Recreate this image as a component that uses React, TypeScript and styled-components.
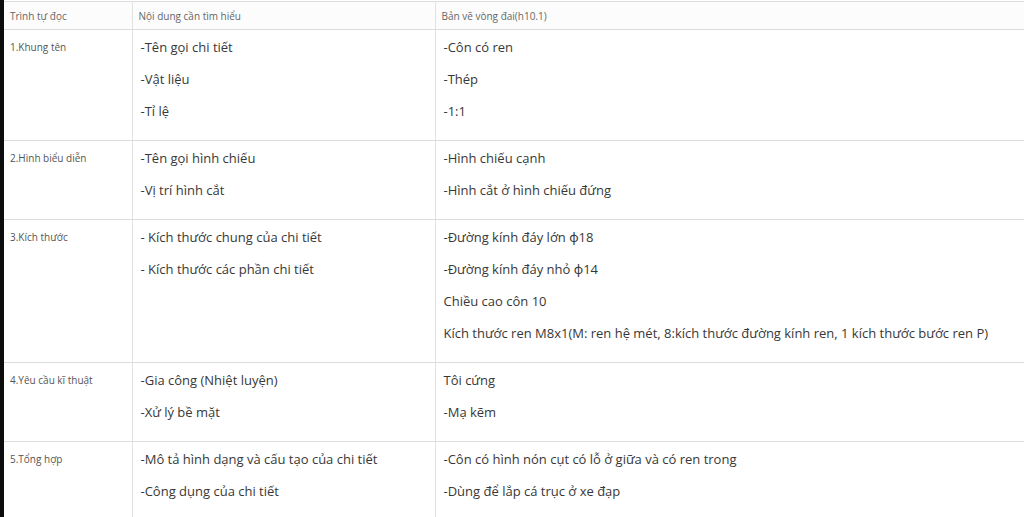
import styled, { createGlobalStyle } from 'styled-components'

const rows = [
  {
    step: '1.Khung tên',
    topics: ['-Tên gọi chi tiết', '-Vật liệu', '-Tỉ lệ'],
    answers: ['-Côn có ren', '-Thép', '-1:1'],
  },
  {
    step: '2.Hình biểu diễn',
    topics: ['-Tên gọi hình chiếu', '-Vị trí hình cắt'],
    answers: ['-Hình chiếu cạnh', '-Hình cắt ở hình chiếu đứng'],
  },
  {
    step: '3.Kích thước',
    topics: ['- Kích thước chung của chi tiết', '- Kích thước các phần chi tiết'],
    answers: [
      '-Đường kính đáy lớn ɸ18',
      '-Đường kính đáy nhỏ ɸ14',
      'Chiều cao côn 10',
      'Kích thước ren M8x1(M: ren hệ mét, 8:kích thước đường kính ren, 1 kích thước bước ren P)',
    ],
  },
  {
    step: '4.Yêu cầu kĩ thuật',
    topics: ['-Gia công (Nhiệt luyện)', '-Xử lý bề mặt'],
    answers: ['Tôi cứng', '-Mạ kẽm'],
  },
  {
    step: '5.Tổng hợp',
    topics: ['-Mô tả hình dạng và cấu tạo của chi tiết', '-Công dụng của chi tiết'],
    answers: ['-Côn có hình nón cụt có lỗ ở giữa và có ren trong', '-Dùng để lắp cá trục ở xe đạp'],
  },
]

export default function App() {
  return (
    <Page>
      <GlobalStyle />
      <Sheet>
        <Table>
          <colgroup>
            <col style={{ width: 128 }} />
            <col style={{ width: 303 }} />
            <col />
          </colgroup>
          <thead>
            <tr>
              <HeadCell>Trình tự đọc</HeadCell>
              <HeadCell>Nội dung cần tìm hiểu</HeadCell>
              <HeadCell>Bản vẽ vòng đai(h10.1)</HeadCell>
            </tr>
          </thead>
          <tbody>
            {rows.map((row) => (
              <tr key={row.step}>
                <StepCell>{row.step}</StepCell>
                <Cell>
                  {row.topics.map((t) => (
                    <Line key={t}>{t}</Line>
                  ))}
                </Cell>
                <Cell>
                  {row.answers.map((a) => (
                    <Line key={a}>{a}</Line>
                  ))}
                </Cell>
              </tr>
            ))}
          </tbody>
        </Table>
      </Sheet>
    </Page>
  )
}

const GlobalStyle = createGlobalStyle`
  html, body {
    margin: 0;
    padding: 0;
    background: #fff;
    overflow: hidden;
  }
`

const Page = styled.div`
  width: 1024px;
  height: 517px;
  display: flex;
  background: #fff;
  border-left: 4px solid #0c0c0c;
  box-sizing: border-box;
  overflow: hidden;
  font-family: 'Open Sans', 'Noto Sans', sans-serif;
`

const Sheet = styled.div`
  flex: 1;
  padding-top: 1px;
  overflow: hidden;
`

const Table = styled.table`
  width: 1040px;
  table-layout: fixed;
  border-collapse: collapse;
`

const HeadCell = styled.th`
  height: 27px;
  padding: 0 6px;
  text-align: left;
  font-weight: 400;
  font-size: 10px;
  color: #666;
  background: #fcfcfc;
  border-top: 1px solid #dcdcdc;
  border-bottom: 1px solid #dcdcdc;
  border-left: 1px solid #e2e2e2;
  white-space: nowrap;

  &:first-child {
    border-left: none;
  }
`

const Cell = styled.td`
  vertical-align: top;
  padding: 8px 8px 6px 8px;
  border-bottom: 1px solid #dcdcdc;
  border-left: 1px solid #e2e2e2;
  font-size: 13px;
  color: #383838;
  white-space: nowrap;
`

const StepCell = styled(Cell)`
  border-left: none;
  padding: 10px 6px 6px 6px;
  font-size: 10px;
  color: #555;
`

const Line = styled.div`
  height: 32px;
  line-height: 18px;
`
